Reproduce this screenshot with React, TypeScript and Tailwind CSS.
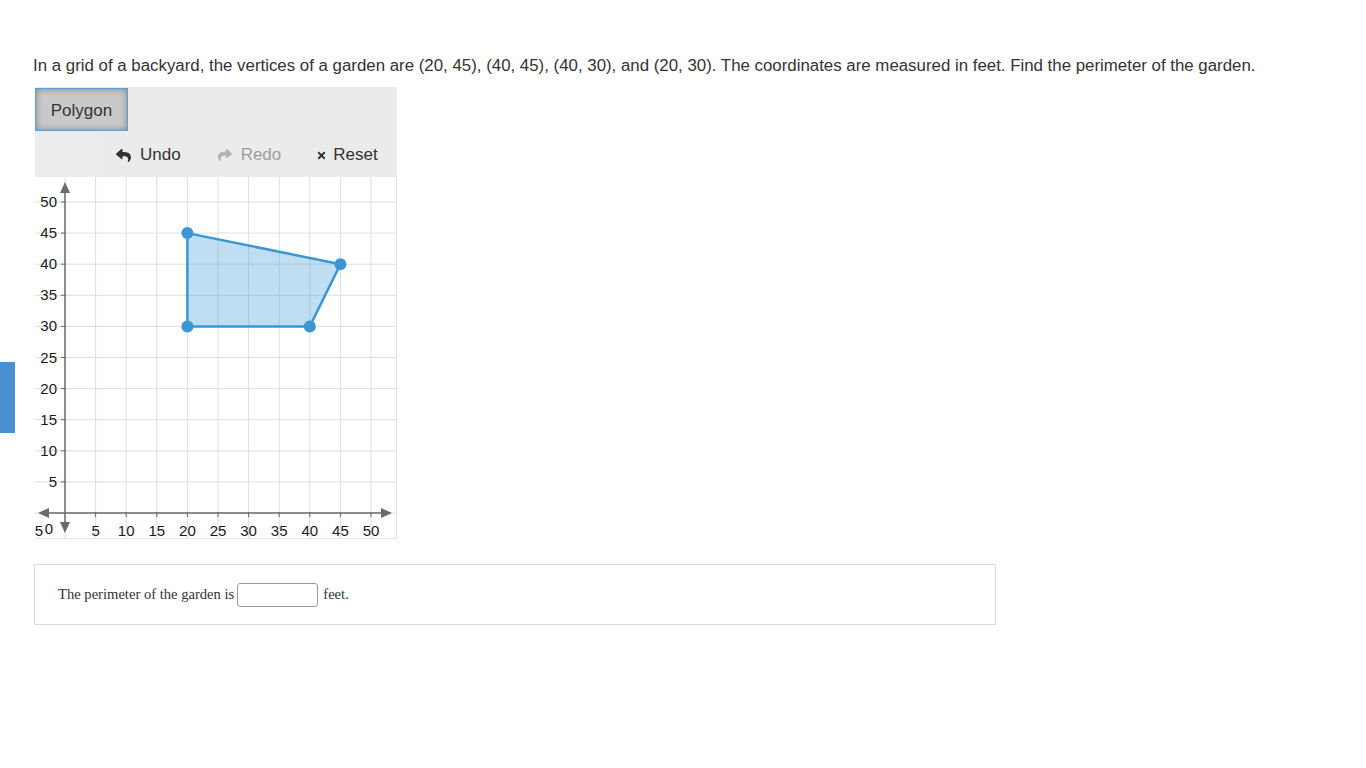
import React from 'react';
import { FaReply, FaShare, FaTimes } from 'react-icons/fa';

const W = 362;
const H = 361;
const px = (x: number) => 30 + x * 6.12;
const py = (y: number) => 336 - y * 6.22;
const ticks = [5, 10, 15, 20, 25, 30, 35, 40, 45, 50];
const verts: [number, number][] = [
  [20, 45],
  [45, 40],
  [40, 30],
  [20, 30],
];

function Graph() {
  const pts = verts.map(([x, y]) => `${px(x)},${py(y)}`).join(' ');
  return (
    <svg width={W} height={H} className="block" style={{ fontFamily: '"Liberation Sans", Arial, sans-serif' }}>
      {/* grid */}
      {[0, ...ticks].map((v) => (
        <line key={'gx' + v} x1={px(v)} y1={0} x2={px(v)} y2={H} stroke="#dedede" strokeWidth={1} />
      ))}
      {[0, ...ticks].map((v) => (
        <line key={'gy' + v} x1={0} y1={py(v)} x2={W} y2={py(v)} stroke="#dedede" strokeWidth={1} />
      ))}
      {/* axes */}
      <line x1={10} y1={py(0)} x2={350} y2={py(0)} stroke="#6b6b6b" strokeWidth={1.5} />
      <line x1={px(0)} y1={12} x2={px(0)} y2={350} stroke="#6b6b6b" strokeWidth={1.5} />
      <polygon points={`3,${py(0)} 14,${py(0) - 5} 14,${py(0) + 5}`} fill="#6b6b6b" />
      <polygon points={`357,${py(0)} 346,${py(0) - 5} 346,${py(0) + 5}`} fill="#6b6b6b" />
      <polygon points={`${px(0)},5 ${px(0) - 5},16 ${px(0) + 5},16`} fill="#6b6b6b" />
      <polygon points={`${px(0)},356 ${px(0) - 5},345 ${px(0) + 5},345`} fill="#6b6b6b" />
      {ticks.map((v) => (
        <g key={'t' + v}>
          <line x1={px(0) - 4} y1={py(v)} x2={px(0) + 1} y2={py(v)} stroke="#6b6b6b" strokeWidth={1} />
          <line x1={px(v)} y1={py(0) - 1} x2={px(v)} y2={py(0) + 4} stroke="#6b6b6b" strokeWidth={1} />
          <text x={22} y={py(v) + 5} textAnchor="end" fontSize={15} fill="#1a1a1a">
            {v}
          </text>
          <text x={px(v)} y={359} textAnchor="middle" fontSize={15} fill="#1a1a1a">
            {v}
          </text>
        </g>
      ))}
      <text x={4} y={359} textAnchor="middle" fontSize={15} fill="#1a1a1a">
        5
      </text>
      <text x={14} y={357} textAnchor="middle" fontSize={15} fill="#1a1a1a">
        0
      </text>
      {/* garden */}
      <polygon points={pts} fill="#3a97d4" fillOpacity={0.32} stroke="#3a97d4" strokeWidth={2.5} strokeLinejoin="round" />
      {verts.map(([x, y]) => (
        <circle key={x + '-' + y} cx={px(x)} cy={py(y)} r={6} fill="#3a97d4" />
      ))}
    </svg>
  );
}

export default function App() {
  return (
    <div className="relative w-full h-[768px] bg-white text-[#333]" style={{ fontFamily: '"Liberation Sans", Arial, sans-serif' }}>
      {/* side tab */}
      <div className="absolute left-0 top-[362px] w-[15px] h-[71px] bg-[#4a8fcf]" />

      <p className="pt-[56px] pl-[33px] text-[16.85px] leading-[20px] text-[#333]">
        In a grid of a backyard, the vertices of a garden are (20, 45), (40, 45), (40, 30), and (20, 30). The coordinates are measured in feet. Find the perimeter of the garden.
      </p>

      <div className="ml-[35px] mt-[11px] w-[362px]">
        {/* tool row */}
        <div className="h-[45px] bg-[#ebebeb] pt-px">
          <button className="w-[93px] h-[43px] border border-[#5aa0dc] bg-[#c9c9c9] shadow-[inset_0_0_7px_rgba(0,0,0,0.35)] text-[17px] text-[#333] pt-[3px]">
            Polygon
          </button>
        </div>
        {/* undo row */}
        <div className="h-[45px] bg-[#ebebeb] flex items-center text-[17px] pt-px">
          <div className="w-[65px] h-full bg-[#ececec]" />
          <div className="flex items-center ml-[16px] text-[#333]">
            <FaReply className="w-[15px] h-[15px]" />
            <span className="ml-[9px]">Undo</span>
          </div>
          <div className="flex items-center ml-[37px] text-[#9e9e9e]">
            <FaShare className="w-[14px] h-[14px] text-[#b3b3b3]" />
            <span className="ml-[9px]">Redo</span>
          </div>
          <div className="flex items-center ml-[35px] text-[#333]">
            <FaTimes className="w-[11px] h-[11px]" />
            <span className="ml-[6px]">Reset</span>
          </div>
        </div>
        {/* graph */}
        <div className="border-r border-b border-[#e3e3e3]">
          <Graph />
        </div>
      </div>

      {/* answer */}
      <div className="ml-[34px] mt-[25px] w-[962px] h-[61px] border border-[#dcdcdc] flex items-center pl-[23px]" style={{ fontFamily: '"Liberation Serif", "Times New Roman", serif' }}>
        <span className="text-[14.6px] text-[#333]">The perimeter of the garden is</span>
        <input className="ml-[3px] w-[81px] h-[24px] border border-[#9a9a9a] rounded-[3px] bg-white" />
        <span className="ml-[5px] text-[14.6px] text-[#333]">feet.</span>
      </div>
    </div>
  );
}
